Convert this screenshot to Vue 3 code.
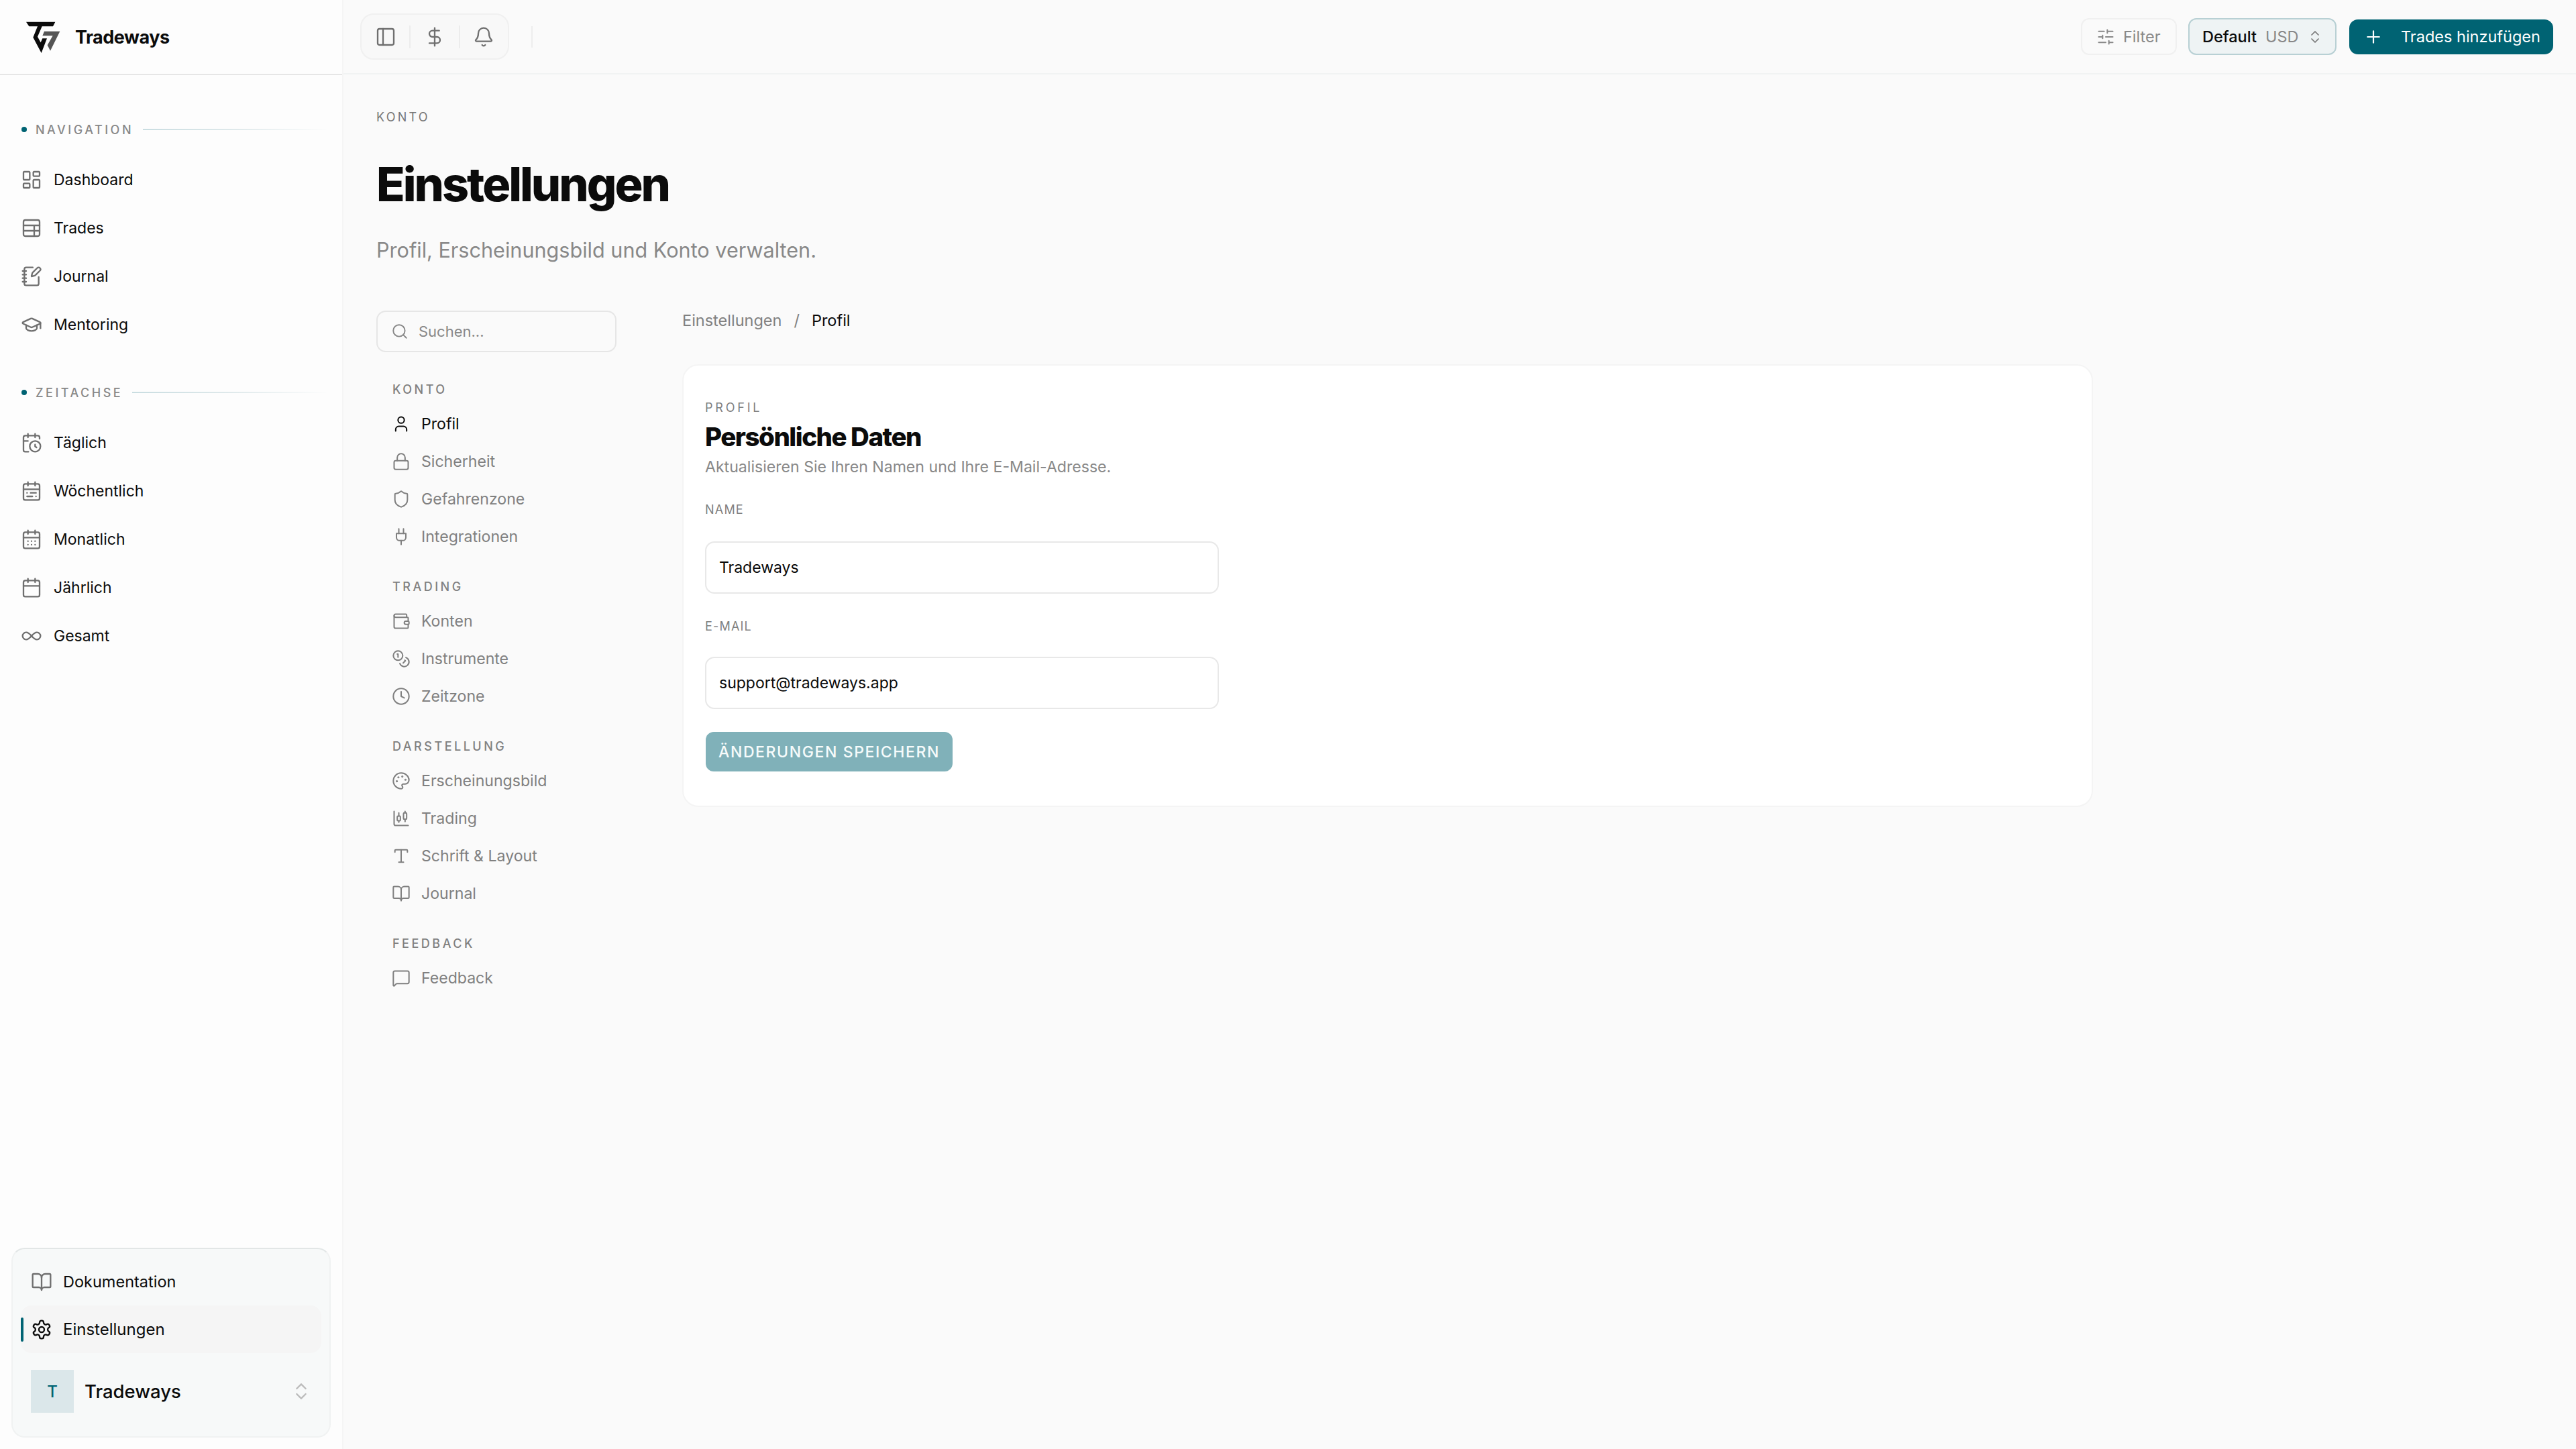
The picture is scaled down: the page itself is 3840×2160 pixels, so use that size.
<template>
  <div class="shell">
    <aside class="side">
      <div class="brand">
        <svg class="logo" viewBox="0 0 210 180">
          <polygon fill="#0b0b0b" points="27,26 157,26 147,46 98,46 78,92 92,118 100,100 120,100 95,165 58,95 78,46 40,46" />
          <polygon fill="#555" points="108,68 178,68 135,155 122,130 146,88 100,88" />
        </svg>
        <span class="brand-name">Tradeways</span>
      </div>

      <nav class="side-nav">
        <div v-for="group in sideGroups" :key="group.title" class="side-group">
          <div class="side-label">
            <i class="dot"></i>
            <span>{{ group.title }}</span>
            <i class="fade"></i>
          </div>
          <a v-for="item in group.items" :key="item.label" class="side-item">
            <svg class="ic32" viewBox="0 0 24 24" v-html="icons[item.icon]"></svg>
            <span>{{ item.label }}</span>
          </a>
        </div>
      </nav>

      <div class="side-foot">
        <a class="foot-item">
          <svg class="ic32" viewBox="0 0 24 24" v-html="icons.book"></svg>
          <span>Dokumentation</span>
        </a>
        <a class="foot-item active">
          <i class="bar"></i>
          <svg class="ic32" viewBox="0 0 24 24" v-html="icons.settings"></svg>
          <span>Einstellungen</span>
        </a>
        <div class="account">
          <div class="avatar">T</div>
          <span class="account-name">Tradeways</span>
          <svg class="updown" viewBox="0 0 24 24" v-html="icons.updown"></svg>
        </div>
      </div>
    </aside>

    <div class="main">
      <header class="top">
        <div class="tools">
          <button class="tool"><svg class="ic32" viewBox="0 0 24 24" v-html="icons.panel"></svg></button>
          <button class="tool"><svg class="ic32" viewBox="0 0 24 24" v-html="icons.dollar"></svg></button>
          <button class="tool"><svg class="ic32" viewBox="0 0 24 24" v-html="icons.bell"></svg></button>
        </div>
        <i class="top-sep"></i>
        <div class="top-right">
          <button class="filter">
            <svg class="ic28" viewBox="0 0 24 24" v-html="icons.sliders"></svg>
            <span>Filter</span>
          </button>
          <button class="account-select">
            <b>Default</b>
            <span>USD</span>
            <svg class="ic24" viewBox="0 0 24 24" v-html="icons.updown"></svg>
          </button>
          <button class="add">
            <svg class="ic30" viewBox="0 0 24 24" v-html="icons.plus"></svg>
            <span>Trades hinzufügen</span>
          </button>
        </div>
      </header>

      <main class="content">
        <div class="eyebrow">KONTO</div>
        <h1 class="title">Einstellungen</h1>
        <p class="sub">Profil, Erscheinungsbild und Konto verwalten.</p>

        <div class="settings">
          <div class="sub-side">
            <div class="search">
              <svg class="ic26" viewBox="0 0 24 24" v-html="icons.search"></svg>
              <span>Suchen...</span>
            </div>
            <div v-for="group in subGroups" :key="group.title" class="sub-group">
              <div class="sub-label">{{ group.title }}</div>
              <a
                v-for="item in group.items"
                :key="item.label"
                class="sub-item"
                :class="{ current: item.label === 'Profil' }"
              >
                <svg class="ic28" viewBox="0 0 24 24" v-html="icons[item.icon]"></svg>
                <span>{{ item.label }}</span>
              </a>
            </div>
          </div>

          <div class="panel">
            <div class="crumbs">
              <span>Einstellungen</span>
              <span class="slash">/</span>
              <span class="crumb-now">Profil</span>
            </div>
            <section class="card">
              <div class="card-eyebrow">PROFIL</div>
              <h2 class="card-title">Persönliche Daten</h2>
              <p class="card-desc">Aktualisieren Sie Ihren Namen und Ihre E-Mail-Adresse.</p>

              <div class="field-label">NAME</div>
              <div class="field">Tradeways</div>
              <div class="field-label second">E-MAIL</div>
              <div class="field second">support@tradeways.app</div>

              <button class="save">ÄNDERUNGEN SPEICHERN</button>
            </section>
          </div>
        </div>
      </main>
    </div>
  </div>
</template>

<script setup>
const icons = {
  dashboard: '<rect x="3" y="3" width="7" height="9" rx="1"/><rect x="14" y="3" width="7" height="5" rx="1"/><rect x="14" y="12" width="7" height="9" rx="1"/><rect x="3" y="16" width="7" height="5" rx="1"/>',
  table: '<rect x="3" y="3" width="18" height="18" rx="2"/><path d="M3 9h18M3 15h18M15 9v12"/>',
  notebook: '<path d="M13.4 2H6a2 2 0 0 0-2 2v16a2 2 0 0 0 2 2h12a2 2 0 0 0 2-2v-7.4"/><path d="M2 6h4M2 10h4M2 14h4M2 18h4"/><path d="M21.378 5.626a1 1 0 1 0-3.004-3.004l-5.01 5.012a2 2 0 0 0-.506.854l-.837 2.87a.5.5 0 0 0 .62.62l2.87-.837a2 2 0 0 0 .854-.506z"/>',
  cap: '<path d="M21.42 10.922a1 1 0 0 0-.019-1.838L12.83 5.18a2 2 0 0 0-1.66 0L2.6 9.08a1 1 0 0 0 0 1.832l8.57 3.908a2 2 0 0 0 1.66 0z"/><path d="M22 10v6"/><path d="M6 12.5V16a6 3 0 0 0 12 0v-3.5"/>',
  calClock: '<path d="M16 14v2.2l1.6 1"/><path d="M16 2v4M8 2v4M3 10h5"/><path d="M21 7.5V6a2 2 0 0 0-2-2H5a2 2 0 0 0-2 2v14a2 2 0 0 0 2 2h3.5"/><circle cx="16" cy="16" r="6"/>',
  calRange: '<rect x="3" y="4" width="18" height="18" rx="2"/><path d="M16 2v4M8 2v4M3 10h18M17 14h-6M13 18H7M7 14h.01M17 18h.01"/>',
  calDays: '<rect x="3" y="4" width="18" height="18" rx="2"/><path d="M16 2v4M8 2v4M3 10h18M8 14h.01M12 14h.01M16 14h.01M8 18h.01M12 18h.01M16 18h.01"/>',
  cal: '<rect x="3" y="4" width="18" height="18" rx="2"/><path d="M16 2v4M8 2v4M3 10h18"/>',
  infinity: '<path d="M6 16c5 0 7-8 12-8a4 4 0 0 1 0 8c-5 0-7-8-12-8a4 4 0 1 0 0 8"/>',
  book: '<path d="M12 7v14"/><path d="M3 18a1 1 0 0 1-1-1V4a1 1 0 0 1 1-1h5a4 4 0 0 1 4 4 4 4 0 0 1 4-4h5a1 1 0 0 1 1 1v13a1 1 0 0 1-1 1h-6a3 3 0 0 0-3 3 3 3 0 0 0-3-3z"/>',
  settings: '<path d="M12.22 2h-.44a2 2 0 0 0-2 2v.18a2 2 0 0 1-1 1.73l-.43.25a2 2 0 0 1-2 0l-.15-.08a2 2 0 0 0-2.73.73l-.22.38a2 2 0 0 0 .73 2.73l.15.1a2 2 0 0 1 1 1.72v.51a2 2 0 0 1-1 1.74l-.15.09a2 2 0 0 0-.73 2.73l.22.38a2 2 0 0 0 2.73.73l.15-.08a2 2 0 0 1 2 0l.43.25a2 2 0 0 1 1 1.73V20a2 2 0 0 0 2 2h.44a2 2 0 0 0 2-2v-.18a2 2 0 0 1 1-1.73l.43-.25a2 2 0 0 1 2 0l.15.08a2 2 0 0 0 2.73-.73l.22-.39a2 2 0 0 0-.73-2.73l-.15-.08a2 2 0 0 1-1-1.74v-.5a2 2 0 0 1 1-1.74l.15-.09a2 2 0 0 0 .73-2.73l-.22-.38a2 2 0 0 0-2.73-.73l-.15.08a2 2 0 0 1-2 0l-.43-.25a2 2 0 0 1-1-1.73V4a2 2 0 0 0-2-2z"/><circle cx="12" cy="12" r="3"/>',
  updown: '<path d="m7 15 5 5 5-5M7 9l5-5 5 5"/>',
  panel: '<rect x="3" y="3" width="18" height="18" rx="2"/><path d="M9 3v18"/>',
  dollar: '<path d="M12 2v20"/><path d="M17 5H9.5a3.5 3.5 0 0 0 0 7h5a3.5 3.5 0 0 1 0 7H6"/>',
  bell: '<path d="M10.268 21a2 2 0 0 0 3.464 0"/><path d="M3.262 15.326A1 1 0 0 0 4 17h16a1 1 0 0 0 .74-1.673C19.41 13.956 18 12.499 18 8A6 6 0 0 0 6 8c0 4.499-1.411 5.956-2.738 7.326"/>',
  sliders: '<path d="M10 5H3M12 19H3M14 3v4M16 17v4M21 12h-9M21 19h-5M21 5h-7M8 10v4M8 12H3"/>',
  plus: '<path d="M5 12h14M12 5v14"/>',
  search: '<path d="m21 21-4.34-4.34"/><circle cx="11" cy="11" r="8"/>',
  user: '<path d="M19 21v-2a4 4 0 0 0-4-4H9a4 4 0 0 0-4 4v2"/><circle cx="12" cy="7" r="4"/>',
  lock: '<rect x="3" y="11" width="18" height="11" rx="2"/><path d="M7 11V7a5 5 0 0 1 10 0v4"/>',
  shield: '<path d="M20 13c0 5-3.5 7.5-7.66 8.95a1 1 0 0 1-.67-.01C7.5 20.5 4 18 4 13V6a1 1 0 0 1 1-1c2 0 4.5-1.2 6.24-2.72a1.17 1.17 0 0 1 1.52 0C14.51 3.81 17 5 19 5a1 1 0 0 1 1 1z"/>',
  plug: '<path d="M12 22v-5M9 8V2M15 8V2"/><path d="M18 8v5a4 4 0 0 1-4 4h-4a4 4 0 0 1-4-4V8Z"/>',
  wallet: '<path d="M19 7V4a1 1 0 0 0-1-1H5a2 2 0 0 0 0 4h15a1 1 0 0 1 1 1v4h-3a2 2 0 0 0 0 4h3a1 1 0 0 0 1-1v-2a1 1 0 0 0-1-1"/><path d="M3 5v14a2 2 0 0 0 2 2h15a1 1 0 0 0 1-1v-4"/>',
  coins: '<circle cx="8" cy="8" r="6"/><path d="M18.09 10.37A6 6 0 1 1 10.34 18"/><path d="M7 6h1v4"/><path d="m16.71 13.88.7.71-2.82 2.82"/>',
  clock: '<circle cx="12" cy="12" r="10"/><path d="M12 6v6l4 2"/>',
  palette: '<path d="M12 22a1 1 0 0 1 0-20 10 9 0 0 1 10 9 5 5 0 0 1-5 5h-2.25a1.75 1.75 0 0 0-1.4 2.8l.3.4a1.75 1.75 0 0 1-1.4 2.8z"/><circle cx="13.5" cy="6.5" r=".5" fill="currentColor"/><circle cx="17.5" cy="10.5" r=".5" fill="currentColor"/><circle cx="6.5" cy="12.5" r=".5" fill="currentColor"/><circle cx="8.5" cy="7.5" r=".5" fill="currentColor"/>',
  candles: '<path d="M9 5v4"/><rect x="7" y="9" width="4" height="6" rx="1"/><path d="M9 15v2M17 3v2"/><rect x="15" y="5" width="4" height="8" rx="1"/><path d="M17 13v3"/><path d="M3 3v16a2 2 0 0 0 2 2h16"/>',
  type: '<path d="M12 4v16M9 20h6"/><path d="M4 7V5a1 1 0 0 1 1-1h14a1 1 0 0 1 1 1v2"/>',
  message: '<path d="M22 17a2 2 0 0 1-2 2H6.828a2 2 0 0 0-1.414.586l-2.202 2.202A.71.71 0 0 1 2 21.286V5a2 2 0 0 1 2-2h16a2 2 0 0 1 2 2z"/>',
};

const sideGroups = [
  {
    title: "NAVIGATION",
    items: [
      { label: "Dashboard", icon: "dashboard" },
      { label: "Trades", icon: "table" },
      { label: "Journal", icon: "notebook" },
      { label: "Mentoring", icon: "cap" },
    ],
  },
  {
    title: "ZEITACHSE",
    items: [
      { label: "Täglich", icon: "calClock" },
      { label: "Wöchentlich", icon: "calRange" },
      { label: "Monatlich", icon: "calDays" },
      { label: "Jährlich", icon: "cal" },
      { label: "Gesamt", icon: "infinity" },
    ],
  },
];

const subGroups = [
  {
    title: "KONTO",
    items: [
      { label: "Profil", icon: "user" },
      { label: "Sicherheit", icon: "lock" },
      { label: "Gefahrenzone", icon: "shield" },
      { label: "Integrationen", icon: "plug" },
    ],
  },
  {
    title: "TRADING",
    items: [
      { label: "Konten", icon: "wallet" },
      { label: "Instrumente", icon: "coins" },
      { label: "Zeitzone", icon: "clock" },
    ],
  },
  {
    title: "DARSTELLUNG",
    items: [
      { label: "Erscheinungsbild", icon: "palette" },
      { label: "Trading", icon: "candles" },
      { label: "Schrift & Layout", icon: "type" },
      { label: "Journal", icon: "book" },
    ],
  },
  {
    title: "FEEDBACK",
    items: [{ label: "Feedback", icon: "message" }],
  },
];
</script>

<style>
html, body { margin: 0; background: #fafafa; }
</style>

<style scoped>
* { box-sizing: border-box; }
svg { flex: none; fill: none; stroke: currentColor; stroke-linecap: round; stroke-linejoin: round; stroke-width: 1.75; }
button { font-family: inherit; border: 0; background: none; padding: 0; }
.ic32 { width: 32px; height: 32px; }
.ic30 { width: 30px; height: 30px; }
.ic28 { width: 28px; height: 28px; }
.ic26 { width: 26px; height: 26px; }
.ic24 { width: 24px; height: 24px; }

.shell {
  display: flex;
  width: 3840px;
  height: 2160px;
  font-family: Inter, "Liberation Sans", sans-serif;
  color: #0b0b0b;
  background: #fafafa;
}

/* sidebar */
.side {
  display: flex;
  flex-direction: column;
  flex: none;
  width: 512px;
  background: #fdfdfd;
  border-right: 2px solid #f5f5f5;
}
.brand {
  display: flex;
  align-items: center;
  height: 112px;
  padding-left: 30px;
  border-bottom: 2px solid #e6e6e6;
}
.logo { width: 70px; height: 60px; stroke: none; margin-top: -2px; }
.brand-name { margin-left: 12px; font-size: 27px; font-weight: 700; letter-spacing: -0.5px; }
.side-nav { padding-top: 69px; }
.side-group { margin-bottom: 53px; }
.side-label {
  display: flex;
  align-items: center;
  height: 24px;
  margin-bottom: 27px;
  padding: 0 20px 0 32px;
  font-size: 18px;
  font-weight: 500;
  letter-spacing: 3.5px;
  color: #888;
}
.dot { width: 8px; height: 8px; margin-right: 13px; border-radius: 50%; background: #006373; }
.fade { flex: 1; height: 2px; margin-left: 14px; background: linear-gradient(90deg, #c9dde1 0%, #dfe9eb 50%, rgba(223, 233, 235, 0) 100%); }
.side-item {
  display: flex;
  align-items: center;
  gap: 17px;
  height: 72px;
  padding-left: 31px;
  font-size: 23px;
}
.side-item svg { color: #6f6f6f; }

.side-foot {
  margin: auto 17px 17px 17px;
  height: 283px;
  padding: 13px 12px 0;
  background: #f7f9f9;
  border: 2px solid #f0f2f2;
  border-top-color: #e2e6e6;
  border-radius: 20px;
}
.foot-item {
  position: relative;
  display: flex;
  align-items: center;
  gap: 16px;
  height: 71px;
  padding-left: 15px;
  border-radius: 16px;
  font-size: 23.5px;
}
.foot-item svg { color: #6f6f6f; }
.foot-item.active { background: #f5f5f5; font-size: 24px; }
.foot-item.active svg { color: #0b0b0b; }
.bar { position: absolute; left: 0; top: 18px; width: 4px; height: 36px; border-radius: 2px; background: #006373; }
.account { display: flex; align-items: center; margin-top: 25px; padding: 0 14px 0 15px; }
.avatar {
  display: flex;
  align-items: center;
  justify-content: center;
  width: 64px;
  height: 64px;
  background: #dbe7ea;
  color: #006373;
  font-size: 24px;
  font-weight: 500;
}
.account-name { flex: 1; margin-left: 16px; font-size: 27.5px; font-weight: 500; }
.updown { width: 32px; height: 32px; color: #bbb; }

/* topbar */
.main { flex: 1; min-width: 0; }
.top {
  display: flex;
  align-items: center;
  height: 111px;
  padding: 0 34px 0 25px;
  border-bottom: 2px solid #f1f3f3;
}
.tools {
  display: flex;
  align-items: center;
  width: 222px;
  height: 69px;
  background: #f8f8f8;
  border: 2px solid #f0f0f0;
  border-radius: 20px;
}
.tool { display: flex; align-items: center; justify-content: center; flex: 1; height: 34px; color: #6f6f6f; border-left: 2px solid #ececec; }
.tool:first-child { border-left: 0; }
.top-sep { width: 2px; height: 32px; margin-left: 33px; background: #eeeeee; }
.top-right { display: flex; align-items: center; margin-left: auto; }
.filter {
  display: flex;
  align-items: center;
  gap: 12px;
  width: 143px;
  height: 55px;
  padding-left: 21px;
  border: 2px solid #f0f0f0;
  border-radius: 12px;
  font-size: 23.5px;
  color: #888;
}
.account-select {
  display: flex;
  align-items: center;
  width: 221px;
  height: 55px;
  margin-left: 17px;
  padding-left: 19px;
  background: #eef3f4;
  border: 2px solid #b8d0d4;
  border-radius: 12px;
  font-size: 23.5px;
  color: #888;
}
.account-select b { font-weight: 500; color: #0b0b0b; }
.account-select span { margin: 0 12px 0 13px; }
.account-select svg { color: #777; }
.add {
  display: flex;
  align-items: center;
  gap: 26px;
  width: 304px;
  height: 52px;
  margin-left: 19px;
  padding-left: 21px;
  background: #006373;
  border-radius: 13px;
  font-size: 23.5px;
  font-weight: 400;
  color: #fff;
}

/* page */
.content { padding: 52px 0 0 49px; }
.eyebrow { height: 24px; line-height: 24px; font-size: 18px; letter-spacing: 3.2px; color: #777; }
.title { margin: 46px 0 0; font-size: 70px; line-height: 84px; font-weight: 800; letter-spacing: -3px; }
.sub { margin: 36px 0 0; font-size: 30.6px; line-height: 40px; color: #888; }
.settings { display: flex; gap: 98px; margin-top: 70px; }

.sub-side { flex: none; width: 358px; }
.search {
  display: flex;
  align-items: center;
  gap: 15px;
  height: 62px;
  padding-left: 20px;
  margin-bottom: 44px;
  border: 2px solid #e6e6e6;
  border-radius: 14px;
  font-size: 22px;
  color: #888;
}
.sub-group { margin-bottom: 35px; }
.sub-label {
  height: 24px;
  line-height: 24px;
  margin-bottom: 11px;
  padding-left: 24px;
  font-size: 18px;
  font-weight: 500;
  letter-spacing: 3.5px;
  color: #808080;
}
.sub-item {
  display: flex;
  align-items: center;
  gap: 16px;
  height: 56px;
  padding-left: 23px;
  font-size: 23.1px;
  color: #808080;
}
.sub-item.current { color: #0b0b0b; }

.panel { flex: none; width: 2103px; }
.crumbs { display: flex; gap: 18px; height: 28px; line-height: 28px; margin-top: 1px; font-size: 23.5px; color: #808080; }
.crumb-now { color: #0b0b0b; }
.card {
  margin-top: 51px;
  height: 660px;
  padding: 51px 32px 0;
  background: #fff;
  border: 2px solid #f4f4f4;
  border-radius: 24px;
}
.card-eyebrow { height: 24px; line-height: 24px; font-size: 18px; letter-spacing: 3.8px; color: #808080; }
.card-title { margin: 9px 0 0; font-size: 38.5px; line-height: 44px; font-weight: 800; letter-spacing: -1.5px; }
.card-desc { margin: 8px 0 0; font-size: 23.1px; line-height: 30px; color: #888; }
.field-label { height: 24px; line-height: 24px; margin-top: 37px; font-size: 18px; letter-spacing: 1.2px; color: #808080; }
.field-label.second { margin-top: 37px; }
.field {
  display: flex;
  align-items: center;
  width: 766px;
  height: 78px;
  margin-top: 35px;
  padding-left: 19px;
  background: #fff;
  border: 2px solid #e8e8e8;
  border-radius: 14px;
  font-size: 23px;
}
.field.second { margin-top: 33px; }
.save {
  display: block;
  width: 368px;
  height: 59px;
  margin: 34px 0 0 1px;
  background: #80b1b9;
  border-radius: 12px;
  font-size: 23px;
  font-weight: 500;
  letter-spacing: 1.6px;
  color: #f6fbfb;
}
</style>
